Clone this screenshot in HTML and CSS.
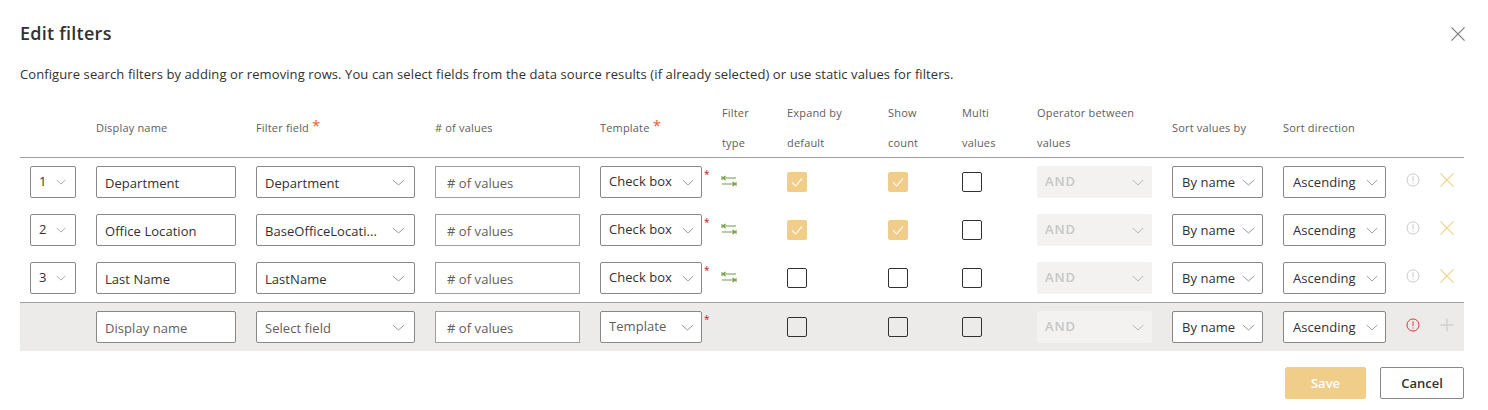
FILE: index.html
```html
<!DOCTYPE html>
<html lang="en">
<head>
<meta charset="utf-8">
<title>Edit filters</title>
<link rel="stylesheet" href="styles.css">
</head>
<body>
<svg class="defs" width="0" height="0" aria-hidden="true">
  <symbol id="chev" viewBox="0 0 16 10" preserveAspectRatio="none"><path d="M1 1.500 8 8.500 15 1.500" fill="none" stroke="currentColor" stroke-width="1"/></symbol>
  <symbol id="tick" viewBox="0 0 20 20"><path d="M4.500 10.500 8.500 14.500 15.500 6" fill="none" stroke="#fff" stroke-width="1.2"/></symbol>
  <symbol id="swap" viewBox="0 0 16 12"><path d="M1 1v4M1.500 3H15M2 3l2.500-2M2 3l2.500 2M15 7v4M1 9h13.500M14 9l-2.500-2M14 9l-2.500 2" fill="none" stroke="#6f9e3c" stroke-width="1.1"/></symbol>
  <symbol id="info" viewBox="0 0 16 16"><circle cx="8" cy="8" r="6.900" fill="none" stroke="currentColor" stroke-width="1.1"/><path d="M8 3.800v5.400" stroke="currentColor" stroke-width="1.1"/><path d="M8 10.800v1.300" stroke="currentColor" stroke-width="1.2"/></symbol>
  <symbol id="cross" viewBox="0 0 16 16"><path d="M.5.500l15 15M15.500.500l-15 15" stroke="currentColor" stroke-width="1.3" fill="none"/></symbol>
  <symbol id="plus" viewBox="0 0 16 16"><path d="M8 .500v15M.5 8h15" stroke="currentColor" stroke-width="1.6" fill="none"/></symbol>
</svg>

<main class="dialog">
  <header class="title-bar">
    <h1 class="title">Edit filters</h1>
    <button class="close" type="button" aria-label="Close"><svg class="close-icon"><use href="#cross"/></svg></button>
  </header>
  <p class="intro">Configure search filters by adding or removing rows. You can select fields from the data source results (if already selected) or use static values for filters.</p>

  <div class="grid head">
    <span></span>
    <span class="h">Display name</span>
    <span class="h">Filter field <b class="req">*</b></span>
    <span class="h"># of values</span>
    <span class="h">Template <b class="req">*</b></span>
    <span class="h two">Filter<br>type</span>
    <span class="h two">Expand by<br>default</span>
    <span class="h two">Show<br>count</span>
    <span class="h two">Multi<br>values</span>
    <span class="h two">Operator between<br>values</span>
    <span class="h">Sort values by</span>
    <span class="h">Sort direction</span>
    <span></span><span></span>
  </div>

  <div class="grid row">
    <div class="f sel num"><span class="up">1</span><svg class="chev tiny"><use href="#chev"/></svg></div>
    <div class="f"><span class="low">Department</span></div>
    <div class="f sel wide"><span class="low">Department</span><svg class="chev"><use href="#chev"/></svg></div>
    <div class="f soft"><span class="ph ind low">&#35; of values</span></div>
    <div class="f sel star"><span class="up">Check box</span><svg class="chev small"><use href="#chev"/></svg></div>
    <svg class="swap"><use href="#swap"/></svg>
    <span class="cb on"><svg><use href="#tick"/></svg></span>
    <span class="cb on"><svg><use href="#tick"/></svg></span>
    <span class="cb"></span>
    <div class="f sel off"><span class="up">AND</span><svg class="chev small"><use href="#chev"/></svg></div>
    <div class="f sel"><span class="nudge">By name</span><svg class="chev"><use href="#chev"/></svg></div>
    <div class="f sel"><span class="nudge">Ascending</span><svg class="chev small"><use href="#chev"/></svg></div>
    <svg class="info"><use href="#info"/></svg>
    <svg class="act x"><use href="#cross"/></svg>
  </div>

  <div class="grid row">
    <div class="f sel num"><span class="up">2</span><svg class="chev tiny"><use href="#chev"/></svg></div>
    <div class="f"><span class="low">Office Location</span></div>
    <div class="f sel wide"><span class="low">BaseOfficeLocati...</span><svg class="chev"><use href="#chev"/></svg></div>
    <div class="f soft"><span class="ph ind low">&#35; of values</span></div>
    <div class="f sel star"><span class="up">Check box</span><svg class="chev small"><use href="#chev"/></svg></div>
    <svg class="swap"><use href="#swap"/></svg>
    <span class="cb on"><svg><use href="#tick"/></svg></span>
    <span class="cb on"><svg><use href="#tick"/></svg></span>
    <span class="cb"></span>
    <div class="f sel off"><span class="up">AND</span><svg class="chev small"><use href="#chev"/></svg></div>
    <div class="f sel"><span class="nudge">By name</span><svg class="chev"><use href="#chev"/></svg></div>
    <div class="f sel"><span class="nudge">Ascending</span><svg class="chev small"><use href="#chev"/></svg></div>
    <svg class="info"><use href="#info"/></svg>
    <svg class="act x"><use href="#cross"/></svg>
  </div>

  <div class="grid row">
    <div class="f sel num"><span class="up">3</span><svg class="chev tiny"><use href="#chev"/></svg></div>
    <div class="f"><span class="low">Last Name</span></div>
    <div class="f sel wide"><span class="low">LastName</span><svg class="chev"><use href="#chev"/></svg></div>
    <div class="f soft"><span class="ph ind low">&#35; of values</span></div>
    <div class="f sel star"><span class="up">Check box</span><svg class="chev small"><use href="#chev"/></svg></div>
    <svg class="swap"><use href="#swap"/></svg>
    <span class="cb"></span>
    <span class="cb"></span>
    <span class="cb"></span>
    <div class="f sel off"><span class="up">AND</span><svg class="chev small"><use href="#chev"/></svg></div>
    <div class="f sel"><span class="nudge">By name</span><svg class="chev"><use href="#chev"/></svg></div>
    <div class="f sel"><span class="nudge">Ascending</span><svg class="chev small"><use href="#chev"/></svg></div>
    <svg class="info"><use href="#info"/></svg>
    <svg class="act x"><use href="#cross"/></svg>
  </div>

  <div class="grid add">
    <span></span>
    <div class="f"><span class="ph low">Display name</span></div>
    <div class="f sel wide"><span class="ph low">Select field</span><svg class="chev"><use href="#chev"/></svg></div>
    <div class="f soft"><span class="ph ind low">&#35; of values</span></div>
    <div class="f sel star"><span class="ph up">Template</span><svg class="chev"><use href="#chev"/></svg></div>
    <span></span>
    <span class="cb"></span>
    <span class="cb"></span>
    <span class="cb"></span>
    <div class="f sel off"><span class="up">AND</span><svg class="chev small"><use href="#chev"/></svg></div>
    <div class="f sel"><span class="nudge">By name</span><svg class="chev"><use href="#chev"/></svg></div>
    <div class="f sel"><span class="nudge">Ascending</span><svg class="chev small"><use href="#chev"/></svg></div>
    <svg class="info err"><use href="#info"/></svg>
    <svg class="act plus"><use href="#plus"/></svg>
  </div>

  <footer class="actions">
    <button class="btn save" type="button">Save</button>
    <button class="btn cancel" type="button">Cancel</button>
  </footer>
</main>
</body>
</html>
```

FILE: styles.css
```css
* { box-sizing: border-box; }
html, body { margin: 0; padding: 0; background: #fff; }
body {
  font-family: "Open Sans", "Liberation Sans", sans-serif;
  color: #323130;
  font-size: 13px;
  width: 1488px;
  height: 410px;
  overflow: hidden;
}
.defs { display: block; height: 0; }
.dialog { padding: 20px 24px 0 20px; display: flex; flex-direction: column; }
.title-bar { display: flex; justify-content: space-between; align-items: center; height: 26px; }
.title { margin: 0; font-size: 18px; font-weight: 600; line-height: 26px; letter-spacing: 0.25px; }
.close { border: 0; background: none; padding: 0; width: 14px; height: 14px; color: #797775; display: flex; margin-top: 2px; margin-right: -1px; }
.close-icon { width: 14px; height: 14px; }
.intro { margin: 19px 0 0; font-size: 13px; line-height: 18px; letter-spacing: 0.095px; }

.grid {
  display: grid;
  grid-template-columns: 46px 140px 159px 145px 102px 45px 81px 54px 55px 115px 91px 103px 14px 15px;
  column-gap: 20px;
  padding: 0 9px 0 10px;
  align-items: center;
}
.head { margin-top: 15px; height: 60px; border-bottom: 1px solid #a19f9d; }
.h { font-size: 11px; color: #605e5c; line-height: 30px; letter-spacing: 0.18px; white-space: nowrap; }
.req { color: #e0603a; font-weight: 400; font-size: 15px; line-height: 10px; position: relative; top: -1px; }
.row { margin-top: 8px; height: 32px; }
.row + .row { margin-top: 16px; }
.add {
  margin-top: 8px;
  height: 49px;
  background: #edebe9;
  border-top: 1px solid #a19f9d;
  padding-top: 8px;
  padding-bottom: 8px;
}
.f {
  height: 32px;
  border: 1px solid #8a8886;
  border-radius: 2px;
  background: #fff;
  display: flex;
  align-items: center;
  justify-content: space-between;
  padding: 0 7px 0 8px;
  font-size: 13px;
  letter-spacing: 0.05px;
  white-space: nowrap;
  min-width: 0;
}
.wide { padding-right: 9px; }
.num { padding-right: 9px; }
.star { position: relative; }
.star::after {
  content: "*";
  position: absolute;
  left: calc(100% + 3px);
  top: 0;
  color: #a4262c;
  font-size: 10px;
  line-height: 14px;
}
.soft { border-color: #a19f9d; border-radius: 0; }
.ind { margin-left: 3px; }
.ph { color: #605e5c; }
.up { position: relative; top: -1px; }
.low { position: relative; top: 1px; }
.nudge { margin-left: 1px; }
.off { background: #f3f2f1; border-color: #f3f2f1; color: #c8c6c4; font-weight: 600; letter-spacing: 0.9px; }
.off .up { margin-left: -1px; }
.chev { width: 13px; height: 7px; color: #7a7876; flex: none; }
.chev.small { width: 12px; height: 7px; }
.chev.tiny { width: 10px; height: 6px; }
.off .chev { color: #a19f9d; }
.swap { width: 16px; height: 12px; margin-top: -2px; margin-left: -1px; }
.cb {
  width: 20px;
  height: 20px;
  border: 1px solid #323130;
  border-radius: 2px;
  display: block;
}
.cb.on { background: #f0ce8a; border-color: #f0ce8a; }
.cb svg { width: 18px; height: 18px; display: block; }
.info { width: 14px; height: 14px; color: #c8c6c4; margin-top: -4px; }
.info.err { color: #d13438; }
.act { width: 14px; height: 14px; margin-top: -4px; }
.x { color: #f3cf8f; }
.plus { color: #d2d0ce; }
.actions { display: flex; justify-content: flex-end; gap: 14px; margin-top: 16px; }
.btn { height: 32px; border-radius: 2px; font: 600 13px "Open Sans", "Liberation Sans", sans-serif; padding: 0; }
.save { width: 81px; background: #f0ce8a; border: 1px solid #f0ce8a; color: #fff; }
.cancel { width: 84px; background: #fff; border: 1px solid #8a8886; color: #323130; }
```
